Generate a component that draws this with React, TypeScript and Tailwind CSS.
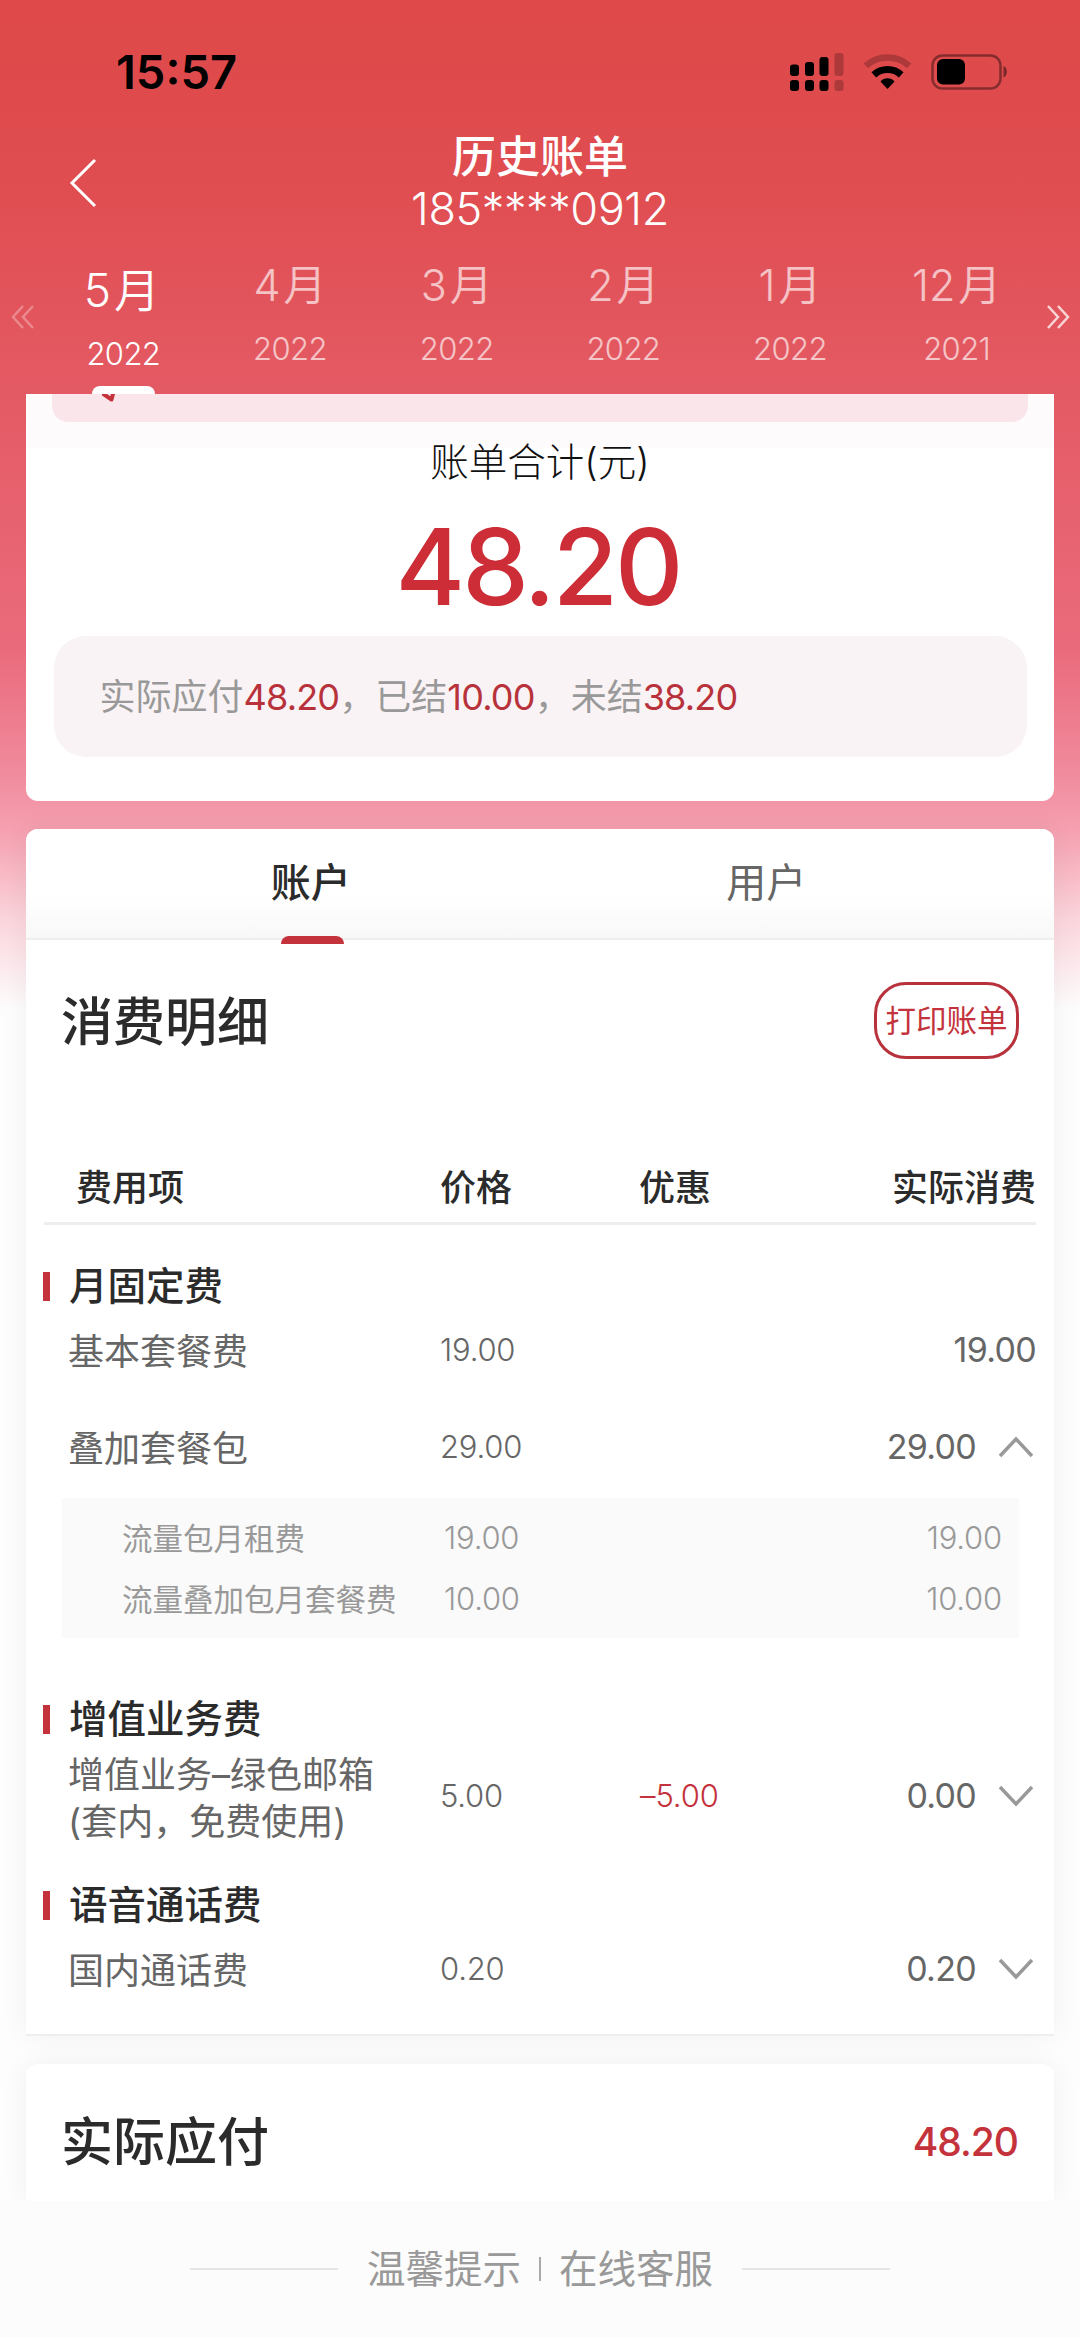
import React from 'react';

interface Month {
  month: string;
  year: string;
  active?: boolean;
}

const months: Month[] = [
  { month: '5', year: '2022', active: true },
  { month: '4', year: '2022' },
  { month: '3', year: '2022' },
  { month: '2', year: '2022' },
  { month: '1', year: '2022' },
  { month: '12', year: '2021' },
];

const StatusIcons: React.FC = () => (
  <svg className="w-[220px] h-10" viewBox="0 0 220 40">
    <g fill="#000">
      <rect x="2" y="12.5" width="9" height="11.500" rx="3" />
      <rect x="17" y="10" width="9" height="14" rx="3" />
      <rect x="31.5" y="5" width="9" height="19" rx="3" />
      <rect x="2" y="28" width="9" height="11" rx="3" />
      <rect x="17" y="28" width="9" height="11" rx="3" />
      <rect x="31.5" y="28" width="9" height="11" rx="3" />
      <g opacity="0.22">
        <rect x="46.5" y="1" width="9" height="23" rx="3" />
        <rect x="46.5" y="28" width="9" height="11" rx="3" />
      </g>
    </g>
    <path d="M77.800 13.900 A32.500 32.500 0 0 1 121.200 13.900" fill="none" stroke="#000" strokeOpacity="0.22" strokeWidth="6.500" />
    <path d="M85.800 22.800 A20.500 20.500 0 0 1 113.200 22.800" fill="none" stroke="#000" strokeWidth="7" />
    <path d="M92.500 29.500 C96 25.200 103 25.200 106.500 29.500 L99.500 37 Z" fill="#000" />
    <rect x="144.500" y="3.500" width="68" height="33" rx="10" fill="none" stroke="#000" strokeOpacity="0.4" strokeWidth="2.500" />
    <rect x="149" y="7" width="28" height="25.500" rx="6" fill="#000" />
    <path d="M215.500 14 C220 15.500 220 24 215.500 25.500 Z" fill="#000" fillOpacity="0.45" />
  </svg>
);

const Chevron: React.FC<{ open?: boolean }> = ({ open }) => (
  <svg className="w-[36px] h-[22px] ml-[22px] mr-[2px]" viewBox="0 0 36 22" fill="none" stroke="#999" strokeWidth="3.500">
    <path d={open ? 'M2 20 L18 3 L34 20' : 'M2 2 L18 19 L34 2'} />
  </svg>
);

const Money: React.FC<{ children: React.ReactNode }> = ({ children }) => (
  <span className="tracking-[-0.8px] text-[#b8323c]">{children}</span>
);

const SectionTitle: React.FC<{ children: React.ReactNode }> = ({ children }) => (
  <div className="flex items-center h-12 pl-[17px]">
    <span className="w-[7px] h-[29px] bg-[#c4323c]" />
    <h3 className="ml-[19px] text-[38.5px] leading-[48px] font-medium text-[#2b2b2b]">{children}</h3>
  </div>
);

interface FeeRowProps {
  name: React.ReactNode;
  price: string;
  discount?: string;
  total: string;
  toggle?: 'open' | 'closed';
}

const FeeRow: React.FC<FeeRowProps> = ({ name, price, discount, total, toggle }) => (
  <div className="flex items-center pl-[42px] pr-[18px] text-[#666]">
    <div className="w-[372px] pt-[3px] -mb-[3px] text-[36px] leading-[47px]">{name}</div>
    <div className="w-[200px] text-[31px] leading-[40px] font-light tracking-[-0.2px]">{price}</div>
    <div className="text-[31px] leading-[40px] tracking-[-0.1px] font-light text-[#c4323c]">{discount}</div>
    <div className="ml-auto flex items-center">
      <span className="text-[34px] leading-[40px] font-[370] tracking-[-0.7px]">{total}</span>
      {toggle && <Chevron open={toggle === 'open'} />}
    </div>
  </div>
);

const SubRow: React.FC<{ name: string; price: string }> = ({ name, price }) => (
  <div className="flex items-center h-[61px] pl-[60px] pr-[17px] text-[30.5px] text-[#999]">
    <span className="w-[322px] whitespace-nowrap">{name}</span>
    <span className="text-[31px] font-light tracking-[-0.2px]">{price}</span>
    <span className="ml-auto text-[31px] font-light tracking-[-0.2px]">{price}</span>
  </div>
);

const App: React.FC = () => {
  return (
    <div className="w-[1080px] h-[2337px] overflow-hidden flex flex-col font-['Inter','Noto_Sans_CJK_SC',sans-serif] bg-[linear-gradient(180deg,#de4848_0px,#e04e52_200px,#e45a64_394px,#ea6b7c_650px,#f08a9c_770px,#f5a0b0_830px,#fbd5dc_920px,#fdfdfd_1010px)]">
      <header className="h-[394px] flex flex-col">
        <div className="h-[120px] pt-[52px] pl-[116px] pr-[72px] flex justify-between">
          <span className="text-[47px] leading-[40px] font-semibold text-black">15:57</span>
          <StatusIcons />
        </div>

        <div className="h-[126px] grid grid-cols-[120px_1fr_120px]">
          <button className="pl-[66px] pt-[38px] self-start">
            <svg className="w-8 h-[50px]" viewBox="0 0 32 50" fill="none" stroke="#fff" strokeWidth="3">
              <path d="M29 2 L6 25 L29 48" />
            </svg>
          </button>
          <div className="text-center text-white pt-[13px]">
            <h1 className="text-[44px] leading-[49px] font-medium">历史账单</h1>
            <p className="text-[45px] leading-[54px] font-light tracking-[-0.4px]">185****0912</p>
          </div>
        </div>

        <nav className="h-[148px] flex items-start">
          <svg className="w-7 h-6 mt-[59px] ml-[9px] mr-[3px] shrink-0" viewBox="0 0 28 24" fill="none" stroke="#fff" strokeOpacity="0.3" strokeWidth="2.500">
            <path d="M14 1 L4 12 L14 23 M24 1 L14 12 L24 23" />
          </svg>
          {months.map((m) => (
            <button
              key={m.month}
              className={
                m.active
                  ? 'flex-1 h-full flex flex-col items-center text-white'
                  : 'flex-1 h-full flex flex-col items-center text-white/65'
              }
            >
              <span
                className={
                  m.active
                    ? 'flex gap-[3px] pr-[3px] text-[46px] leading-[50px] mt-[19px]'
                    : 'flex gap-[3px] text-[43px] leading-[50px] mt-[14px]'
                }
              >
                <span className="font-light">{m.month}</span>
                <span className="font-[350]">月</span>
              </span>
              <span
                className={
                  m.active
                    ? 'mt-[19px] text-[31px] leading-[40px] font-light tracking-[-0.6px]'
                    : 'mt-[19px] text-[31px] leading-[40px] font-light tracking-[-0.6px]'
                }
              >
                {m.year}
              </span>
              {m.active && <span className="mt-auto w-[63px] h-2 rounded-t-lg bg-white" />}
            </button>
          ))}
          <svg className="w-7 h-6 mt-[59px] ml-1 mr-2 shrink-0" viewBox="0 0 28 24" fill="none" stroke="#fff" strokeOpacity="0.75" strokeWidth="2.500">
            <path d="M4 1 L14 12 L4 23 M14 1 L24 12 L14 23" />
          </svg>
        </nav>
      </header>

      <section className="mx-[26px] h-[407px] rounded-b-xl flex flex-col items-center shrink-0 bg-[linear-gradient(180deg,#fefbfc_54px,#fff_54px)]">
        <div className="w-[976px] h-7 bg-[#fae6ea] rounded-b-2xl">
          <svg className="ml-[50px] w-4 h-2" viewBox="0 0 16 8" fill="none" stroke="#c4323c" strokeWidth="4" strokeLinejoin="round">
            <path d="M0 -1 L9.500 5.500 L11.500 -2" />
          </svg>
        </div>
        <p className="mt-[16px] text-[38.5px] leading-[48px] font-light text-[#111]">账单合计(元)</p>
        <p className="mt-[26px] pr-1 text-[106px] leading-[110px] font-medium tracking-[-3px] text-[#cc2d36]">48.20</p>
        <div className="mt-[14px] w-[973px] h-[121px] rounded-[32px] bg-[#f9f3f5] flex items-center pl-[46px] text-[36px] text-[#999]">
          <p>
            实际应付<Money>48.20</Money>，已结<Money>10.00</Money>，未结<Money>38.20</Money>
          </p>
        </div>
      </section>

      <section className="mx-[26px] mt-7 h-[1207px] shrink-0 bg-white rounded-t-xl border-b-2 border-[#eee] shadow-[0_0_28px_rgba(0,0,0,0.055)]">
        <div className="h-[111px] pl-[57px] pr-[60px] flex text-[40px] rounded-t-xl border-b-2 border-[#eee] bg-[linear-gradient(180deg,#fff_60%,#f8f8f8)]">
          <button className="flex-1 h-[115px] flex flex-col items-center font-medium text-[#2b2b2b]">
            <span className="mt-[28px] leading-[52px]">账户</span>
            <span className="mt-auto ml-1 w-[63px] h-2 rounded-t-lg bg-[#c4323c]" />
          </button>
          <button className="flex-1 h-[115px] flex flex-col items-center text-[#666]">
            <span className="mt-[28px] leading-[52px]">用户</span>
          </button>
        </div>

        <div className="flex items-center justify-between pl-[35px] pr-[35px] mt-[42px] h-[77px]">
          <h2 className="text-[52px] pt-[5px] font-medium text-[#2b2b2b]">消费明细</h2>
          <button className="w-[145px] h-[77px] rounded-[32px] border-3 border-[#b8323c] text-[30.5px] text-[#c4323c] whitespace-nowrap flex items-center justify-center">
            打印账单
          </button>
        </div>

        <div className="mx-[18px] mt-[104px] h-[62px] pl-[32px] flex text-[36px] leading-[50px] font-medium text-[#2b2b2b] border-b-3 border-[#eee]">
          <span className="w-[364px]">费用项</span>
          <span className="w-[199px]">价格</span>
          <span>优惠</span>
          <span className="ml-auto">实际消费</span>
        </div>

        <div className="mt-[37px]">
          <SectionTitle>月固定费</SectionTitle>
          <div className="mt-[16px]">
            <FeeRow name="基本套餐费" price="19.00" total="19.00" />
          </div>
          <div className="mt-[50px]">
            <FeeRow name="叠加套餐包" price="29.00" total="29.00" toggle="open" />
          </div>
          <div className="mt-7 ml-9 mr-[35px] h-[140px] pt-[10px] bg-[#fafafa]">
            <SubRow name="流量包月租费" price="19.00" />
            <SubRow name="流量叠加包月套餐费" price="10.00" />
          </div>
        </div>

        <div className="mt-[57px]">
          <SectionTitle>增值业务费</SectionTitle>
          <div className="mt-[6px]">
            <FeeRow
              name={<>增值业务–绿色邮箱<br />(套内，免费使用)</>}
              price="5.00"
              discount="–5.00"
              total="0.00"
              toggle="closed"
            />
          </div>
        </div>

        <div className="mt-[38px]">
          <SectionTitle>语音通话费</SectionTitle>
          <div className="mt-4">
            <FeeRow name="国内通话费" price="0.20" total="0.20" toggle="closed" />
          </div>
        </div>
      </section>

      <section className="mx-[26px] mt-7 h-[137px] shrink-0 pl-[35px] pr-9 pt-5 bg-white rounded-t-xl shadow-[0_0_28px_rgba(0,0,0,0.055)] flex items-center justify-between">
        <h2 className="text-[52px] font-medium text-[#2b2b2b]">实际应付</h2>
        <span className="text-[39px] font-medium tracking-[-1px] text-[#c4323c]">48.20</span>
      </section>

      <footer className="relative grow bg-[#fcfcfc] flex items-center justify-center text-[38.5px] text-[#999]">
        <span className="w-[148px] h-[2px] bg-[#e4e4e4]" />
        <span className="ml-[29px] pt-0.5">温馨提示</span>
        <span className="mx-[18px] w-0.5 h-6 bg-[#aaa]" />
        <span className="mr-[29px] pt-0.5">在线客服</span>
        <span className="w-[148px] h-[2px] bg-[#e4e4e4]" />
      </footer>
    </div>
  );
};

export default App;
